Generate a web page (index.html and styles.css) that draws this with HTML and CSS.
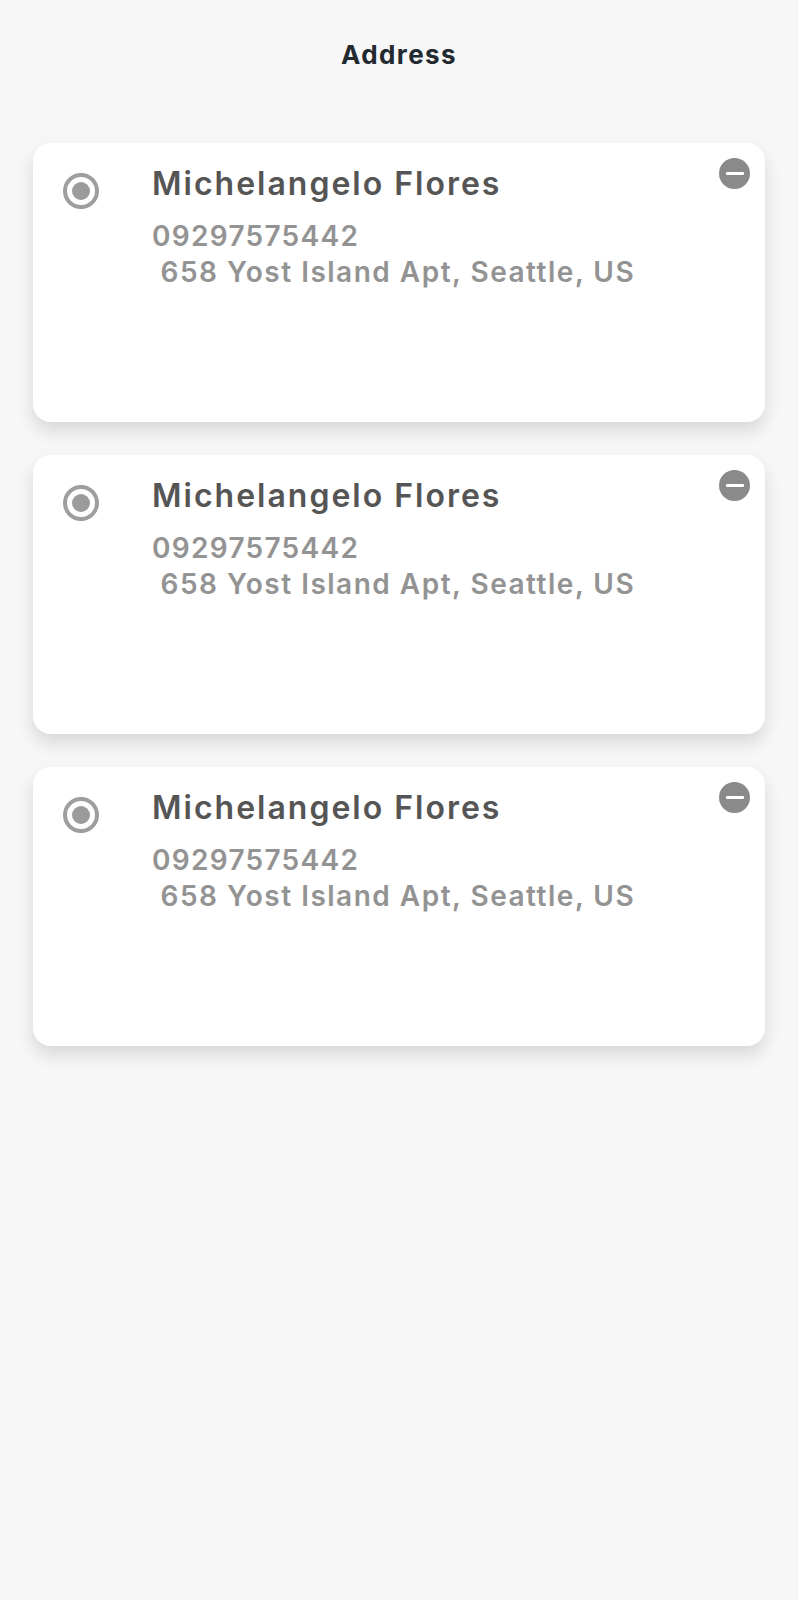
FILE: index.html
```html
<!DOCTYPE html>
<html lang="en">
<head>
<meta charset="utf-8">
<title>Address</title>
<link rel="stylesheet" href="styles.css">
</head>
<body>
<div class="page">
  <header class="topbar"><h1 class="title">Address</h1></header>
  <main class="list">
    <div class="card">
      <span class="radio"><span class="radio-dot"></span></span>
      <div class="info">
        <div class="name">Michelangelo Flores</div>
        <div class="phone">09297575442</div>
        <div class="addr">&nbsp;658 Yost Island Apt, Seattle, US</div>
      </div>
      <span class="remove"><span class="remove-bar"></span></span>
    </div>
    <div class="card">
      <span class="radio"><span class="radio-dot"></span></span>
      <div class="info">
        <div class="name">Michelangelo Flores</div>
        <div class="phone">09297575442</div>
        <div class="addr">&nbsp;658 Yost Island Apt, Seattle, US</div>
      </div>
      <span class="remove"><span class="remove-bar"></span></span>
    </div>
    <div class="card">
      <span class="radio"><span class="radio-dot"></span></span>
      <div class="info">
        <div class="name">Michelangelo Flores</div>
        <div class="phone">09297575442</div>
        <div class="addr">&nbsp;658 Yost Island Apt, Seattle, US</div>
      </div>
      <span class="remove"><span class="remove-bar"></span></span>
    </div>
  </main>
</div>
</body>
</html>
```
FILE: styles.css
```css
html, body {
  margin: 0;
  padding: 0;
  background: #f7f7f7;
}
body {
  font-family: Inter, "Noto Sans", sans-serif;
  min-height: 1600px;
}
.page {
  display: flex;
  flex-direction: column;
}
.topbar {
  height: 108px;
  display: flex;
  justify-content: center;
  align-items: center;
}
.title {
  margin: 0;
  font-size: 26px;
  font-weight: 700;
  color: #222a30;
  letter-spacing: 1.4px;
}
.list {
  display: flex;
  flex-direction: column;
  gap: 33px;
  padding: 35px 33px 0 33px;
}
.card {
  height: 279px;
  background: #ffffff;
  border-radius: 18px;
  box-shadow: 0 9px 18px rgba(0, 0, 0, 0.13);
  display: flex;
  align-items: flex-start;
  padding: 15px 15px 0 30px;
  box-sizing: border-box;
}
.radio {
  flex: none;
  width: 36px;
  height: 36px;
  margin-top: 15px;
  border: 4px solid #9e9e9e;
  border-radius: 50%;
  box-sizing: border-box;
  display: flex;
  justify-content: center;
  align-items: center;
}
.radio-dot {
  width: 18px;
  height: 18px;
  border-radius: 50%;
  background: #9b9b9b;
}
.info {
  flex: 1;
  margin-left: 53px;
  margin-top: 7px;
  display: flex;
  flex-direction: column;
}
.name {
  font-size: 32px;
  font-weight: 600;
  color: #555555;
  line-height: 38px;
  letter-spacing: 2px;
}
.phone {
  font-size: 28px;
  font-weight: 600;
  color: #939393;
  line-height: 36px;
  letter-spacing: 1.3px;
  margin-top: 15px;
}
.addr {
  font-size: 28px;
  font-weight: 600;
  color: #939393;
  line-height: 37px;
  letter-spacing: 1.5px;
}
.remove {
  flex: none;
  width: 31px;
  height: 31px;
  border-radius: 50%;
  background: #8a8a8a;
  display: flex;
  justify-content: center;
  align-items: center;
}
.remove-bar {
  width: 18px;
  height: 3px;
  border-radius: 1px;
  background: #ffffff;
}
```
